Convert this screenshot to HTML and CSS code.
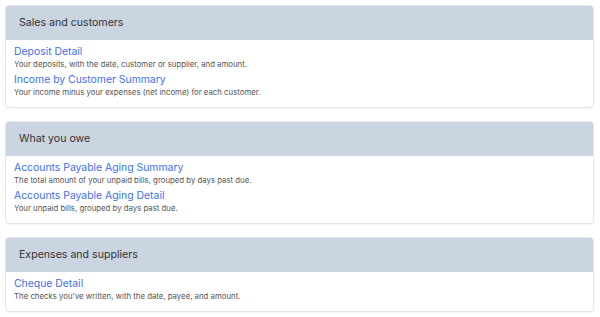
FILE: index.html
```html
<!DOCTYPE html>
<html lang="en">
<head>
    <meta charset="UTF-8">
    <meta name="viewport" content="width=device-width, initial-scale=1.0">
    <title>Reports</title>
    <link rel="stylesheet" href="styles.css">
</head>
<body>
    <div class="report-list">
        <div class="card">
            <div class="card-header">Sales and customers</div>
            <div class="card-body">
                <div class="report">
                    <a href="#" class="report-link">Deposit Detail</a>
                    <p class="report-desc">Your deposits, with the date, customer or supplier, and amount.</p>
                </div>
                <div class="report">
                    <a href="#" class="report-link">Income by Customer Summary</a>
                    <p class="report-desc">Your income minus your expenses (net income) for each customer.</p>
                </div>
            </div>
        </div>

        <div class="card">
            <div class="card-header">What you owe</div>
            <div class="card-body">
                <div class="report">
                    <a href="#" class="report-link">Accounts Payable Aging Summary</a>
                    <p class="report-desc">The total amount of your unpaid bills, grouped by days past due.</p>
                </div>
                <div class="report">
                    <a href="#" class="report-link">Accounts Payable Aging Detail</a>
                    <p class="report-desc">Your unpaid bills, grouped by days past due.</p>
                </div>
            </div>
        </div>

        <div class="card">
            <div class="card-header">Expenses and suppliers</div>
            <div class="card-body">
                <div class="report">
                    <a href="#" class="report-link">Cheque Detail</a>
                    <p class="report-desc">The checks you've written, with the date, payee, and amount.</p>
                </div>
            </div>
        </div>
    </div>
</body>
</html>
```

FILE: styles.css
```css
body {
    font-family: Inter, "Liberation Sans", sans-serif;
    background-color: #ffffff;
    margin: 0;
    padding: 5px 6px 5px 5px;
}
.report-list {
    display: flex;
    flex-direction: column;
    gap: 13px;
}
.card {
    background: white;
    border: 1px solid #e5e7eb;
    border-radius: 4px;
    box-shadow: 0 1px 2px rgba(0, 0, 0, 0.05);
    overflow: hidden;
}
.card-header {
    background: #cbd5e1;
    color: #333333;
    font-size: 10.6px;
    height: 34px;
    line-height: 34px;
    padding: 0 13px;
}
.card-body {
    padding: 5px 8px 9px;
}
.report {
    margin-bottom: 3px;
}
.report:last-child {
    margin-bottom: 0;
}
.report-link {
    display: block;
    color: #3d6ff0;
    font-size: 10.4px;
    line-height: 13px;
    text-decoration: none;
}
.report-desc {
    margin: 0;
    color: #555555;
    font-size: 7.8px;
    line-height: 12px;
}
```
